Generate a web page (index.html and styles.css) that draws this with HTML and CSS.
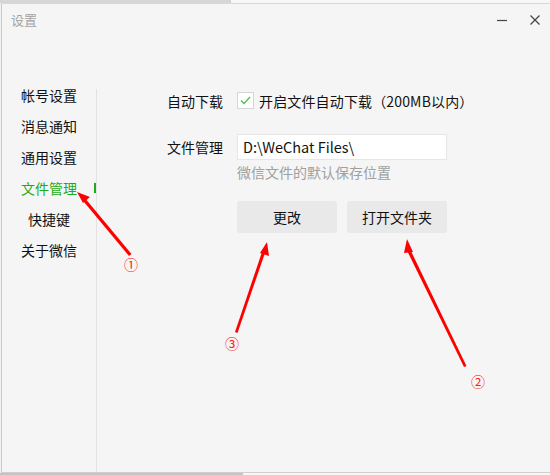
FILE: index.html
```html
<!DOCTYPE html>
<html lang="zh-CN">
<head>
<meta charset="utf-8">
<title>设置</title>
<link rel="stylesheet" href="styles.css">
</head>
<body>
<div class="strip strip-top"></div>
<div class="window">
  <div class="titlebar">
    <span class="title">设置</span>
    <div class="controls">
      <svg class="ctl" width="10" height="10" viewBox="0 0 10 10"><path d="M0 5.5H10" stroke="#444" stroke-width="1.2"/></svg>
      <svg class="ctl" width="10" height="10" viewBox="0 0 10 10"><path d="M0.5 0.5L9.5 9.5M9.5 0.5L0.5 9.5" stroke="#444" stroke-width="1.2"/></svg>
    </div>
  </div>
  <div class="body">
    <nav class="sidebar">
      <div class="item">帐号设置</div>
      <div class="item">消息通知</div>
      <div class="item">通用设置</div>
      <div class="item active">文件管理</div>
      <div class="item indent">快捷键</div>
      <div class="item">关于微信</div>
    </nav>
    <div class="divider"></div>
    <main class="content">
      <div class="row row-check">
        <span class="label">自动下载</span>
        <span class="checkbox"><svg width="11" height="9" viewBox="0 0 11 9"><path d="M1 4.5L4 7.5L10 1" fill="none" stroke="#4cbf4c" stroke-width="1.3"/></svg></span>
        <span class="check-text">开启文件自动下载（200MB以内）</span>
      </div>
      <div class="row row-path">
        <span class="label">文件管理</span>
        <div class="input">D:\WeChat Files\</div>
      </div>
      <div class="hint">微信文件的默认保存位置</div>
      <div class="buttons">
        <div class="btn">更改</div>
        <div class="btn">打开文件夹</div>
      </div>
    </main>
  </div>
</div>
<div class="strip strip-bottom"></div>

<svg class="annot" width="550" height="475" viewBox="0 0 550 475">
  <g fill="#ff0000" stroke="none">
    <polygon points="129,256 131.5,254 84,197 81.5,199"/>
    <polygon points="77,192 90,197 83,203"/>
    <polygon points="464,367 466.5,366 409,247 406,248.5"/>
    <polygon points="407,239 413,252 404,253"/>
    <polygon points="235,332 237.5,333 266,250 263,249"/>
    <polygon points="267,242 269,256 260,253"/>
  </g>
</svg>
<span class="num n1">①</span>
<span class="num n2">②</span>
<span class="num n3">③</span>
</body>
</html>
```
FILE: styles.css
```css
* { box-sizing: border-box; }
html, body {
  margin: 0;
  padding: 0;
}
body {
  width: 550px;
  height: 475px;
  overflow: hidden;
  position: relative;
  background: #f2f2f2;
  font-family: "Noto Sans CJK SC", "Microsoft YaHei", sans-serif;
  font-size: 14px;
  color: #111;
}
.strip {
  height: 3px;
  background: linear-gradient(to right, #d6d6d6 0, #d6d6d6 230px, #cfcfcf 230px, #cfcfcf 231px, #f7f7f7 231px);
}
.strip-bottom {
  height: 2px;
  background: linear-gradient(to right, #c4c4c4 0, #c4c4c4 243px, #f7f7f7 243px);
}
.window {
  margin-left: 1px;
  height: 470px;
  background: #f5f5f5;
  border-left: 1px solid #c8c8c8;
  border-top: 1px solid #d8d8d8;
  border-bottom: 1px solid #cfcfcf;
  display: flex;
  flex-direction: column;
}
.titlebar {
  height: 36px;
  display: flex;
  justify-content: space-between;
  align-items: flex-start;
  padding: 7px 0 0 9px;
}
.title {
  font-size: 13px;
  line-height: 18px;
  color: #a3a3a3;
}
.controls {
  display: flex;
  gap: 23px;
  padding: 4px 10px 0 0;
}
.ctl { display: block; }
.body {
  flex: 1;
  display: flex;
}
.sidebar {
  width: 94px;
  padding-top: 40px;
}
.item {
  height: 31px;
  line-height: 31px;
  padding-left: 19px;
  display: flex;
  justify-content: space-between;
  align-items: center;
  color: #111;
}
.item.indent { padding-left: 26px; }
.item.active { color: #1aad19; }
.item.active::after {
  content: "";
  width: 2px;
  height: 10px;
  margin-top: -2px;
  background: #1aad19;
}
.divider {
  width: 1px;
  margin-top: 49px;
  background: #e2e2e2;
}
.content {
  flex: 1;
  padding: 52px 0 0 70px;
}
.row {
  display: flex;
  align-items: center;
}
.label {
  width: 70px;
  line-height: 20px;
}
.row-check { height: 17px; }
.checkbox {
  width: 17px;
  height: 17px;
  border: 1px solid #d6d6d6;
  background: #fff;
  display: flex;
  align-items: center;
  justify-content: center;
  margin-right: 5px;
}
.checkbox svg { display: block; }
.check-text { line-height: 20px; letter-spacing: 0.15px; }
.row-path {
  margin-top: 25px;
}
.input {
  width: 210px;
  height: 26px;
  line-height: 24px;
  border: 1px solid #e6e6e6;
  background: #fff;
  padding-left: 5px;
  font-size: 14.5px;
  color: #111;
}
.hint {
  margin: 2px 0 0 70px;
  line-height: 20px;
  color: #a0a0a0;
}
.buttons {
  display: flex;
  gap: 10px;
  margin: 19px 0 0 70px;
}
.btn {
  width: 100px;
  height: 32px;
  line-height: 32px;
  text-align: center;
  background: #e9e9e9;
  border-radius: 3px;
  color: #111;
}
.annot {
  position: absolute;
  left: 0;
  top: 0;
  pointer-events: none;
}
.num {
  position: absolute;
  font-size: 14px;
  line-height: 16px;
  color: #ff1a1a;
  width: 16px;
  text-align: center;
}
.n1 { left: 123px; top: 256px; }
.n2 { left: 470px; top: 373px; }
.n3 { left: 224px; top: 335px; }
```
